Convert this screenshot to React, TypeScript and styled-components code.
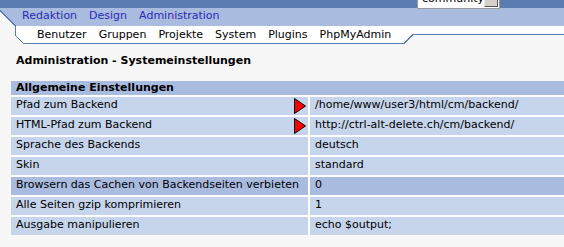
import React from 'react';
import styled, { createGlobalStyle } from 'styled-components';

const Global = createGlobalStyle`
  html, body { margin: 0; padding: 0; background: #f7f7f7; }
  body { font-family: "DejaVu Sans", Verdana, sans-serif; font-size: 11px; color: #000; }
`;

const LINE = '#5b7cb3';
const BAND = '#a9bbdf';
const ROW = '#c6d5eb';
const PAGE = '#f7f7f7';

const Page = styled.div`
  width: 564px;
  overflow: hidden;
`;

const Header = styled.header`
  position: relative;
`;

const TopBar = styled.div`
  height: 8px;
  background: ${LINE};
  display: flex;
  justify-content: flex-end;
  align-items: flex-end;
  padding-right: 64px;
  position: relative;
  z-index: 3;
`;

const SelectBox = styled.div`
  width: 83px;
  height: 20px;
  margin-bottom: -1px;
  box-sizing: border-box;
  background: #fff;
  border: 1px solid #9a9a9a;
  border-top: none;
  display: flex;
  align-items: flex-end;
  justify-content: space-between;
  padding: 0 1px 1px 4px;
`;

const SelectText = styled.span`
  line-height: 14px;
  margin-bottom: 1px;
`;

const SelectButton = styled.span`
  width: 18px;
  height: 18px;
  box-sizing: border-box;
  background: #d4d0c8;
  border: 1px solid #555;
  border-top-color: #eee;
  border-left-color: #eee;
`;

const MainNav = styled.nav`
  height: 18px;
  background: ${BAND};
  display: flex;
  align-items: flex-start;
  gap: 12px;
  padding-left: 22px;
  line-height: 15px;
`;

const MainLink = styled.span`
  color: #2a2ab5;
`;

const SubNavRow = styled.div`
  display: flex;
  height: 18px;
  background: #fff;
`;

const SubTab = styled.div`
  flex: 0 0 404px;
  box-sizing: border-box;
  height: 18px;
  border-bottom: 1px solid ${LINE};
  display: flex;
  gap: 12px;
  padding-left: 37px;
  line-height: 18px;
`;

const SubLink = styled.span`
  color: #000;
`;

const SubRest = styled.div`
  flex: 1;
  background: linear-gradient(#fff 0 8px, ${LINE} 8px 9px, ${PAGE} 9px 100%);
`;

const CornerLeft = styled.svg`
  position: absolute;
  left: 0;
  top: 8px;
  z-index: 2;
`;

const Title = styled.h1`
  margin: 10px 0 0 16px;
  font-size: 11px;
  font-weight: bold;
  line-height: 14px;
`;

const Table = styled.div`
  margin: 13px 0 0 11px;
  width: 560px;
  display: flex;
  flex-direction: column;
  gap: 2px;
  background: #fff;
`;

const SectionHead = styled.div`
  height: 14px;
  line-height: 14px;
  background: ${BAND};
  font-weight: bold;
  padding-left: 5px;
`;

const Row = styled.div`
  display: grid;
  grid-template-columns: 297px 1fr;
  column-gap: 2px;
  height: 18px;
`;

const Cell = styled.div<{ $hl?: boolean }>`
  background: ${(p) => (p.$hl ? BAND : ROW)};
  padding-left: 5px;
  line-height: 16px;
  display: flex;
  justify-content: space-between;
  align-items: flex-start;
  white-space: nowrap;
  overflow: hidden;
`;

const Arrow = styled.svg`
  margin: 1px 2px 0 0;
  flex: none;
`;

const rows: { label: string; value: string; arrow?: boolean; hl?: boolean }[] = [
  { label: 'Pfad zum Backend', value: '/home/www/user3/html/cm/backend/', arrow: true },
  { label: 'HTML-Pfad zum Backend', value: 'http://ctrl-alt-delete.ch/cm/backend/', arrow: true },
  { label: 'Sprache des Backends', value: 'deutsch' },
  { label: 'Skin', value: 'standard' },
  { label: 'Browsern das Cachen von Backendseiten verbieten', value: '0', hl: true },
  { label: 'Alle Seiten gzip komprimieren', value: '1' },
  { label: 'Ausgabe manipulieren', value: 'echo $output;' },
];

export default function App() {
  return (
    <Page>
      <Global />
      <Header>
        <TopBar>
          <SelectBox>
            <SelectText>community</SelectText>
            <SelectButton />
          </SelectBox>
        </TopBar>
        <MainNav>
          <MainLink>Redaktion</MainLink>
          <MainLink>Design</MainLink>
          <MainLink>Administration</MainLink>
        </MainNav>
        <SubNavRow>
          <SubTab>
            {['Benutzer', 'Gruppen', 'Projekte', 'System', 'Plugins', 'PhpMyAdmin'].map((s) => (
              <SubLink key={s}>{s}</SubLink>
            ))}
          </SubTab>
          <svg width="9" height="18" viewBox="0 0 9 18" shapeRendering="crispEdges">
            <polygon points="0,18 9,9 9,18" fill={PAGE} />
            <line x1="0" y1="17.5" x2="9" y2="8.5" stroke={LINE} strokeWidth="1" />
          </svg>
          <SubRest />
        </SubNavRow>
        <CornerLeft width="25" height="36" viewBox="0 0 25 36" shapeRendering="crispEdges">
          <polygon points="0,2.5 15,17.5 15,27.5 23.5,36 0,36" fill={PAGE} />
          <polyline
            points="0,2.5 15.5,18 15.5,27.5 23.5,35.5 25,35.5"
            fill="none"
            stroke={LINE}
            strokeWidth="1"
          />
        </CornerLeft>
      </Header>
      <Title>Administration - Systemeinstellungen</Title>
      <Table>
        <SectionHead>Allgemeine Einstellungen</SectionHead>
        {rows.map((r) => (
          <Row key={r.label}>
            <Cell $hl={r.hl}>
              <span>{r.label}</span>
              {r.arrow && (
                <Arrow width="12" height="16" viewBox="0 0 12 16">
                  <polygon points="0.5,0.5 11.5,8 0.5,15.5" fill="#ff0000" stroke="#000" strokeWidth="1" />
                </Arrow>
              )}
            </Cell>
            <Cell $hl={r.hl}>{r.value}</Cell>
          </Row>
        ))}
      </Table>
    </Page>
  );
}
